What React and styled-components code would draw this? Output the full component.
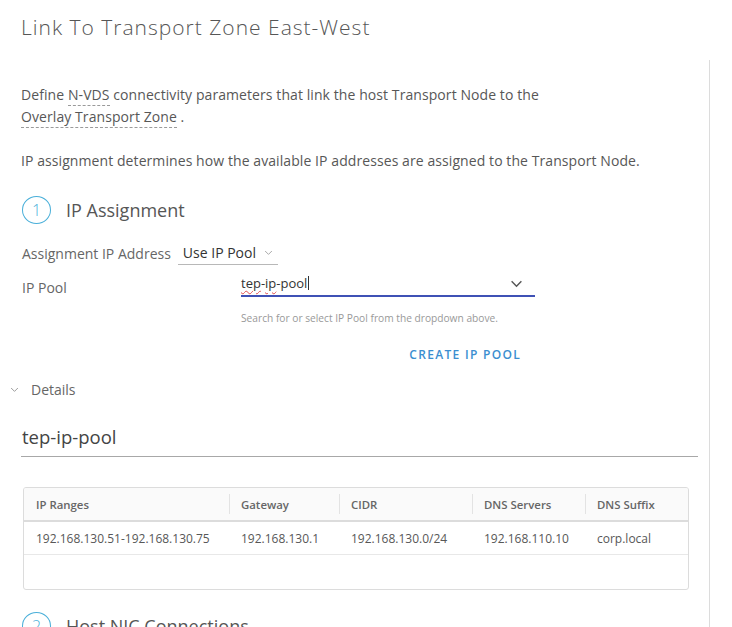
import React from "react";
import styled, { createGlobalStyle } from "styled-components";

const Global = createGlobalStyle`
  html, body { margin: 0; padding: 0; background: #fff; }
  body { font-family: "Open Sans", "Lato", sans-serif; color: #565656; overflow: hidden; }
  * { box-sizing: border-box; }
`;

const Page = styled.div`
  width: 732px;
  height: 627px;
  overflow: hidden;
`;

const Title = styled.h1`
  margin: 15px 0 0 21px;
  font-size: 21px;
  line-height: 24px;
  font-weight: 300;
  letter-spacing: 1px;
  color: #565656;
`;

const Body = styled.div`
  margin-top: 21px;
  width: 710px;
  border-right: 1px solid #dcdcdc;
  padding: 24px 0 0 21px;
  min-height: 600px;
`;

const Para = styled.p`
  margin: 0 0 ${(p) => p.$gap || 0}px 0;
  font-size: 14px;
  line-height: 22px;
  letter-spacing: 0.08px;
  color: #575757;
`;

const Term = styled.span`
  border-bottom: 1px dashed #9a9a9a;
  padding-bottom: 1px;
`;

const Step = styled.div`
  display: flex;
  align-items: center;
  gap: 15px;
  height: 28px;
  margin-top: ${(p) => p.$top}px;
  padding-left: 1px;
`;

const StepNum = styled.div`
  width: 29px;
  height: 28px;
  border: 1.5px solid #49afd9;
  border-radius: 50%;
  display: flex;
  align-items: center;
  justify-content: center;
  font-size: 16px;
  font-weight: 300;
  color: #49afd9;
`;

const StepLabel = styled.div`
  font-size: 18px;
  font-weight: 400;
  color: #565656;
`;

const FieldRow = styled.div`
  display: flex;
  align-items: ${(p) => (p.$stack ? "flex-start" : "center")};
  min-height: 24px;
  margin-top: ${(p) => p.$top}px;
  padding-left: 1px;
`;

const Label = styled.div`
  font-size: 14px;
  color: #666;
  width: ${(p) => (p.$w ? p.$w + "px" : "auto")};
  margin-top: ${(p) => p.$top || 0}px;
  flex: none;
`;

const Select = styled.div`
  margin-left: 7px;
  display: flex;
  align-items: center;
  gap: 8px;
  height: 24px;
  padding: 0 5px 0 5px;
  border-bottom: 1px solid #b8b8b8;
  font-size: 14px;
  color: #333;
`;

const InputCol = styled.div`
  width: 294px;
  display: flex;
  flex-direction: column;
`;

const Input = styled.div`
  display: flex;
  align-items: center;
  justify-content: space-between;
  height: 26px;
  padding: 0 12px 0 0;
  border-bottom: 2px solid #3f51b5;
  margin-top: 4px;
  font-size: 13px;
  color: #333;
`;

const Typo = styled.span`
  text-decoration: underline wavy #e05050;
  text-decoration-thickness: 1px;
  text-underline-offset: 2px;
`;

const Caret = styled.span`
  display: inline-block;
  width: 1px;
  height: 14px;
  background: #333;
  vertical-align: -2px;
  margin-left: 1px;
`;

const Helper = styled.div`
  margin-top: 14px;
  font-size: 10.2px;
  color: #999;
`;

const LinkButton = styled.div`
  align-self: flex-end;
  margin-top: 21px;
  margin-right: 14px;
  font-size: 12px;
  font-weight: 600;
  letter-spacing: 1.3px;
  color: #3b8ed0;
`;

const Toggle = styled.div`
  display: flex;
  align-items: center;
  gap: 12px;
  margin: 16px 0 0 -11px;
  height: 20px;
  font-size: 14px;
  color: #666;
`;

const PoolName = styled.div`
  margin-top: 26px;
  width: 677px;
  padding: 0 0 7px 1px;
  border-bottom: 1px solid #a8a8a8;
  font-size: 18.5px;
  line-height: 24px;
  color: #444;
`;

const Table = styled.div`
  margin: 30px 0 0 2px;
  width: 666px;
  border: 1px solid #dcdcdc;
  border-radius: 3px;
  overflow: hidden;
`;

const HeadRow = styled.div`
  display: grid;
  grid-template-columns: 205px 110px 133px 113px 1fr;
  height: 34px;
  background: #fafafa;
  border-bottom: 2px solid #dcdcdc;
`;

const HeadCell = styled.div`
  display: flex;
  align-items: center;
  padding-left: 12px;
  font-size: 11.4px;
  font-weight: 600;
  color: #666;
  position: relative;
  &:not(:first-child)::before {
    content: "";
    position: absolute;
    left: 0;
    top: 6px;
    bottom: 6px;
    width: 1px;
    background: #e3e3e3;
  }
`;

const Row = styled.div`
  display: grid;
  grid-template-columns: 205px 110px 133px 113px 1fr;
  height: ${(p) => p.$h}px;
  border-bottom: ${(p) => (p.$last ? "none" : "1px solid #e8e8e8")};
`;

const Cell = styled.div`
  display: flex;
  align-items: center;
  padding-left: 12px;
  font-size: 12px;
  color: #575757;
`;

const Chevron = ({ size = 12, color = "#555", sw = 1.2 }) => (
  <svg width={size} height={size} viewBox="0 0 12 12" fill="none">
    <polyline points="1.5,4 6,8.5 10.5,4" stroke={color} strokeWidth={sw} />
  </svg>
);

const cols = ["IP Ranges", "Gateway", "CIDR", "DNS Servers", "DNS Suffix"];
const row = ["192.168.130.51-192.168.130.75", "192.168.130.1", "192.168.130.0/24", "192.168.110.10", "corp.local"];

export default function App() {
  return (
    <Page>
      <Global />
      <Title>Link To Transport Zone East-West</Title>
      <Body>
        <Para $gap={22}>
          Define <Term>N-VDS</Term> connectivity parameters that link the host Transport Node to the
          <br />
          <Term>Overlay Transport Zone</Term> .
        </Para>
        <Para>IP assignment determines how the available IP addresses are assigned to the Transport Node.</Para>

        <Step $top={24}>
          <StepNum>1</StepNum>
          <StepLabel>IP Assignment</StepLabel>
        </Step>

        <FieldRow $top={17}>
          <Label>Assignment IP Address</Label>
          <Select>
            Use IP Pool <Chevron size={9} color="#999" sw={1.1} />
          </Select>
        </FieldRow>

        <FieldRow $top={2} $stack>
          <Label $w={219} $top={11}>IP Pool</Label>
          <InputCol>
            <Input>
              <span>
                <Typo>tep</Typo>-<Typo>ip</Typo>-pool<Caret />
              </span>
              <Chevron size={13} color="#555" sw={1.3} />
            </Input>
            <Helper>Search for or select IP Pool from the dropdown above.</Helper>
            <LinkButton>CREATE IP POOL</LinkButton>
          </InputCol>
        </FieldRow>

        <Toggle>
          <Chevron size={9} color="#888" sw={1.1} />
          Details
        </Toggle>

        <PoolName>tep-ip-pool</PoolName>

        <Table>
          <HeadRow>
            {cols.map((c) => (
              <HeadCell key={c}>{c}</HeadCell>
            ))}
          </HeadRow>
          <Row $h={33}>
            {row.map((c) => (
              <Cell key={c}>{c}</Cell>
            ))}
          </Row>
          <Row $h={34} $last />
        </Table>

        <Step $top={22}>
          <StepNum>2</StepNum>
          <StepLabel>Host NIC Connections</StepLabel>
        </Step>
      </Body>
    </Page>
  );
}
